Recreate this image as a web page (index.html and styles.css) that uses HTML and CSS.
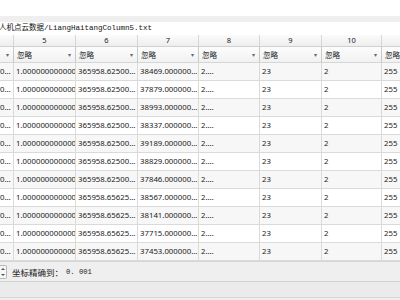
FILE: index.html
```html
<!DOCTYPE html>
<html>
<head>
<meta charset="utf-8">
<link rel="stylesheet" href="styles.css">
</head>
<body>
<div class="page">
  <div class="topbar"></div>
  <div class="pathbox">人机点云数据/LiangHaitangColumn5.txt</div>
  <div class="grid">
    <div class="hd"></div><div class="hd">5</div><div class="hd">6</div><div class="hd">7</div><div class="hd">8</div><div class="hd">9</div><div class="hd">10</div><div class="hd"></div>
    <div class="cb first"><span class="arr">▾</span></div>
    <div class="cb"><span>忽略</span><span class="arr">▾</span></div>
    <div class="cb"><span>忽略</span><span class="arr">▾</span></div>
    <div class="cb"><span>忽略</span><span class="arr">▾</span></div>
    <div class="cb"><span>忽略</span><span class="arr">▾</span></div>
    <div class="cb"><span>忽略</span><span class="arr">▾</span></div>
    <div class="cb"><span>忽略</span><span class="arr">▾</span></div>
    <div class="cb"><span>忽略</span></div>
  </div>
  <div class="grid rows" id="rows"></div>
  <div class="footer">
    <div class="spin"><span class="up"></span><span class="dn"></span></div>
    <span class="lbl">坐标精确到：</span><span class="val">0. 001</span>
  </div>
  <div class="bottom"></div>
</div>
<script>
  var c6 = ["62500","62500","62500","62500","62500","62500","62500","65625","65625","65625","65625"];
  var c7 = ["38469","37879","38993","38337","39189","38829","37846","38567","38141","37715","37453"];
  var html = "";
  for (var i = 0; i < 11; i++) {
    var cls = i % 2 === 0 ? "alt" : "";
    html += '<div class="dc c0 ' + cls + '">0…</div>' +
      '<div class="dc ' + cls + '">1.000000000000</div>' +
      '<div class="dc ' + cls + '">365958.' + c6[i] + '…</div>' +
      '<div class="dc ' + cls + '">' + c7[i] + '.000000…</div>' +
      '<div class="dc ' + cls + '">2.…</div>' +
      '<div class="dc ' + cls + '">23</div>' +
      '<div class="dc ' + cls + '">2</div>' +
      '<div class="dc ' + cls + '">255</div>';
  }
  document.getElementById("rows").innerHTML = html;
</script>
</body>
</html>
```
FILE: styles.css
```css
html, body {
  margin: 0;
  padding: 0;
}
body {
  width: 400px;
  height: 300px;
  overflow: hidden;
  background: #efefef;
  font-family: "Noto Sans", "Noto Sans CJK SC", sans-serif;
  color: #222;
}
.page {
  display: flex;
  flex-direction: column;
  width: 400px;
  height: 300px;
  overflow: hidden;
}
.topbar {
  height: 16px;
  background: #fff;
  flex: none;
}
.pathbox {
  margin-top: 6px;
  height: 13px;
  background: #fff;
  font-family: "Liberation Mono", "Noto Sans CJK SC", monospace;
  font-size: 7.5px;
  line-height: 13px;
  color: #111;
  white-space: nowrap;
  margin-left: -1px;
  flex: none;
}
.grid {
  display: grid;
  grid-template-columns: 14px 62px 62px 61px 61px 62px 60px 40px;
  width: 422px;
  flex: none;
}
.hd {
  height: 11px;
  line-height: 11px;
  font-size: 7.5px;
  text-align: center;
  background: linear-gradient(#fbfbfb, #eeeeee);
  border-right: 1px solid #d6d6d6;
  border-bottom: 1px solid #d0d0d0;
}
.cb {
  height: 15px;
  display: flex;
  align-items: center;
  justify-content: space-between;
  padding: 0 4px 0 3px;
  font-size: 7.5px;
  font-family: "Noto Sans CJK SC", sans-serif;
  background: linear-gradient(#fdfdfd, #f1f1f1);
  border-right: 1px solid #c9c9c9;
  border-bottom: 1px solid #d6d6d6;
  color: #222;
}
.cb.first { justify-content: flex-end; }
.arr {
  font-size: 6px;
  color: #666;
  font-family: "DejaVu Sans", sans-serif;
}
.rows .dc {
  height: 17px;
  line-height: 17px;
  font-size: 7.8px;
  padding-left: 2px;
  white-space: nowrap;
  overflow: hidden;
  background: #fff;
  border-right: 1px solid #dadada;
  border-bottom: 1px solid #dadada;
}
.rows .dc.alt { background: #f7f7f7; }
.rows .dc.c0 { padding-left: 0; }
.footer {
  height: 19px;
  display: flex;
  align-items: center;
  border-bottom: 1px solid #d2d2d2;
  border-top: 1px solid #d6d6d6;
  flex: none;
}
.spin {
  width: 6px;
  height: 12px;
  border: 1px solid #b8b8b8;
  border-left: none;
  border-radius: 0 2px 2px 0;
  background: #f6f6f6;
  display: flex;
  flex-direction: column;
  justify-content: space-around;
  align-items: center;
}
.spin .up {
  width: 0; height: 0;
  border-left: 2px solid transparent;
  border-right: 2px solid transparent;
  border-bottom: 2px solid #555;
}
.spin .dn {
  width: 0; height: 0;
  border-left: 2px solid transparent;
  border-right: 2px solid transparent;
  border-top: 2px solid #555;
}
.lbl {
  margin-left: 5px;
  font-size: 8.5px;
  font-family: "Noto Sans CJK SC", sans-serif;
}
.val {
  margin-left: 3px;
  font-size: 7.2px;
  font-family: "Liberation Mono", monospace;
}
.bottom {
  height: 15px;
  background: #ebebeb;
  border-bottom: 1px solid #d6d6d6;
  flex: none;
}
```
